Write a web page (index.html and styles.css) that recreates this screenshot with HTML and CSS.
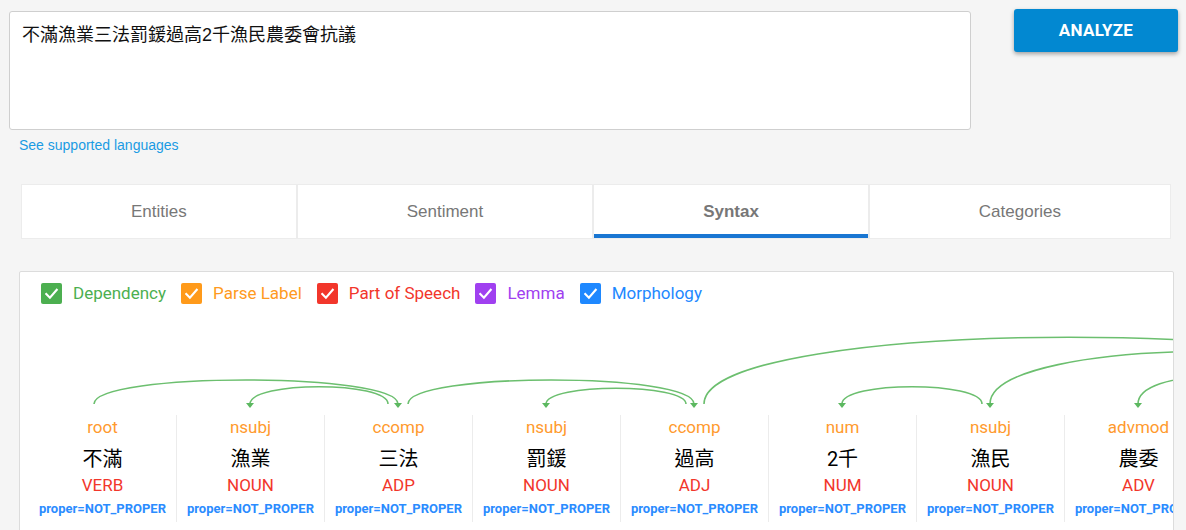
FILE: index.html
```html
<!DOCTYPE html>
<html lang="zh-Hant">
<head>
<meta charset="utf-8">
<title>Natural Language</title>
<link rel="stylesheet" href="styles.css">
</head>
<body>
<div class="header">
  <textarea class="input" spellcheck="false">不滿漁業三法罰鍰過高2千漁民農委會抗議</textarea>
  <button class="analyze">ANALYZE</button>
</div>
<a class="langs" href="#">See supported languages</a>

<div class="tabs">
  <div class="tab">Entities</div>
  <div class="tab">Sentiment</div>
  <div class="tab active">Syntax</div>
  <div class="tab">Categories</div>
</div>

<div class="syntax">
  <div class="toggles">
    <label class="toggle green"><span class="box"><svg viewBox="0 0 20 20"><path d="M5 10.5 L8.5 14 L15 6.5"/></svg></span>Dependency</label>
    <label class="toggle orange"><span class="box"><svg viewBox="0 0 20 20"><path d="M5 10.5 L8.5 14 L15 6.5"/></svg></span>Parse Label</label>
    <label class="toggle red"><span class="box"><svg viewBox="0 0 20 20"><path d="M5 10.5 L8.5 14 L15 6.5"/></svg></span>Part of Speech</label>
    <label class="toggle purple"><span class="box"><svg viewBox="0 0 20 20"><path d="M5 10.5 L8.5 14 L15 6.5"/></svg></span>Lemma</label>
    <label class="toggle blue"><span class="box"><svg viewBox="0 0 20 20"><path d="M5 10.5 L8.5 14 L15 6.5"/></svg></span>Morphology</label>
  </div>
  <div class="tree">
    <svg class="arcs" width="1420" height="111" viewBox="0 0 1420 111">
      <g class="arc">
        <path d="M74,100 C74,68 378,68 378,100"/>
        <path d="M368,100 C368,77 230,77 230,100"/>
        <path d="M388,100 C388,68 674,68 674,100"/>
        <path d="M666,100 C666,79 526,79 526,100"/>
        <path d="M684,100 C684,11 1414,11 1414,100"/>
        <path d="M1406,100 C1406,30 970,30 970,100"/>
        <path d="M1258,100 C1258,64 1118,64 1118,100"/>
        <path d="M962,100 C962,77 822,77 822,100"/>
      </g>
      <g class="head">
        <polygon points="226,99 234,99 230,104"/>
        <polygon points="374,99 382,99 378,104"/>
        <polygon points="522,99 530,99 526,104"/>
        <polygon points="670,99 678,99 674,104"/>
        <polygon points="818,99 826,99 822,104"/>
        <polygon points="966,99 974,99 970,104"/>
        <polygon points="1114,99 1122,99 1118,104"/>
      </g>
    </svg>
    <div class="tokens">
      <div class="token"><div class="lbl">root</div><div class="word">不滿</div><div class="pos">VERB</div><div class="morph">proper=NOT_PROPER</div></div>
      <div class="token"><div class="lbl">nsubj</div><div class="word">漁業</div><div class="pos">NOUN</div><div class="morph">proper=NOT_PROPER</div></div>
      <div class="token"><div class="lbl">ccomp</div><div class="word">三法</div><div class="pos">ADP</div><div class="morph">proper=NOT_PROPER</div></div>
      <div class="token"><div class="lbl">nsubj</div><div class="word">罰鍰</div><div class="pos">NOUN</div><div class="morph">proper=NOT_PROPER</div></div>
      <div class="token"><div class="lbl">ccomp</div><div class="word">過高</div><div class="pos">ADJ</div><div class="morph">proper=NOT_PROPER</div></div>
      <div class="token"><div class="lbl">num</div><div class="word">2千</div><div class="pos">NUM</div><div class="morph">proper=NOT_PROPER</div></div>
      <div class="token"><div class="lbl">nsubj</div><div class="word">漁民</div><div class="pos">NOUN</div><div class="morph">proper=NOT_PROPER</div></div>
      <div class="token"><div class="lbl">advmod</div><div class="word">農委</div><div class="pos">ADV</div><div class="morph">proper=NOT_PROPER</div></div>
    </div>
  </div>
</div>
</body>
</html>
```
FILE: styles.css
```css
html, body {
  margin: 0;
  padding: 0;
  background: #f5f5f5;
  overflow: hidden;
}

body {
  font-family: "Liberation Sans", "Noto Sans CJK TC", sans-serif;
  color: #000;
}

.header {
  display: flex;
  align-items: flex-start;
  padding: 9px 8px 0 9px;
  gap: 43px;
}

.input {
  box-sizing: border-box;
  width: 962px;
  height: 119px;
  margin: 2px 0 0 0;
  padding: 11px 12px;
  border: 1px solid #cfcfcf;
  border-radius: 3px;
  background: #fff;
  font-family: "Liberation Sans", "Noto Sans CJK TC", sans-serif;
  font-size: 18px;
  line-height: 24px;
  color: #111;
  resize: none;
  outline: none;
}

.analyze {
  width: 164px;
  height: 43px;
  border: none;
  border-radius: 3px;
  background: #0288d1;
  color: #fff;
  font-family: Roboto, "Liberation Sans", sans-serif;
  font-weight: 700;
  font-size: 17px;
  letter-spacing: 0.3px;
  box-shadow: 0 2px 4px rgba(0, 0, 0, 0.35);
  padding: 0;
  padding-bottom: 1px;
}

.langs {
  display: block;
  margin: 7px 0 0 19px;
  width: max-content;
  font-size: 14px;
  line-height: 16px;
  color: #1a9be3;
  text-decoration: none;
}

.tabs {
  display: flex;
  gap: 2px;
  margin: 31px 0 0 21px;
  width: 1150px;
  box-sizing: border-box;
  padding: 1px;
  background: #ececec;
}

.tab {
  flex: 1 1 auto;
  position: relative;
  height: 53px;
  line-height: 53px;
  text-align: center;
  background: #fff;
  font-size: 17px;
  color: #777;
}

.tab.active {
  font-weight: 700;
  box-shadow: inset 0 -4px 0 #1976d2;
}

.syntax {
  margin: 32px 0 0 19px;
  width: 1155px;
  height: 300px;
  box-sizing: border-box;
  border: 1px solid #dcdcdc;
  border-radius: 2px;
  background: #fff;
  overflow: hidden;
}

.toggles {
  display: flex;
  align-items: center;
  gap: 15px;
  padding: 10px 0 0 21px;
  height: 22px;
  font-family: Roboto, "Liberation Sans", sans-serif;
  font-size: 17px;
}

.toggle {
  display: flex;
  align-items: center;
  gap: 11px;
  line-height: 22px;
}

.box {
  width: 21px;
  height: 21px;
  border-radius: 2px;
  display: block;
}

.box svg {
  display: block;
  width: 21px;
  height: 21px;
  fill: none;
  stroke: #fff;
  stroke-width: 2;
  stroke-linecap: square;
}

.green { color: #4caf50; }
.green .box { background: #4caf50; }
.orange { color: #ff9a21; }
.orange .box { background: #ff9a1a; }
.red { color: #f2362b; }
.red .box { background: #f2362b; }
.purple { color: #a040f0; }
.purple .box { background: #a040f0; }
.blue { color: #1e88ff; }
.blue .box { background: #1e88ff; }

.tree {
  width: 1420px;
}

.arcs {
  display: block;
}

.arc path {
  fill: none;
  stroke: #6cbf6f;
  stroke-width: 1.6;
}

.head polygon {
  fill: #5cb860;
}

.tokens {
  display: flex;
  padding-left: 9px;
}

.token {
  flex: 0 0 148px;
  box-sizing: border-box;
  border-right: 1px solid #ececec;
  text-align: center;
  padding-bottom: 3px;
  font-family: Roboto, "Noto Sans CJK TC", sans-serif;
}

.lbl {
  font-size: 17px;
  line-height: 24px;
  color: #ff9a2e;
}

.word {
  margin-top: 4px;
  font-size: 20px;
  line-height: 32px;
  color: #000;
}

.pos {
  font-size: 17px;
  line-height: 20px;
  color: #f2362b;
}

.morph {
  margin-top: 4px;
  font-size: 13px;
  line-height: 20px;
  font-weight: 700;
  color: #2b8cff;
  white-space: nowrap;
}
```
